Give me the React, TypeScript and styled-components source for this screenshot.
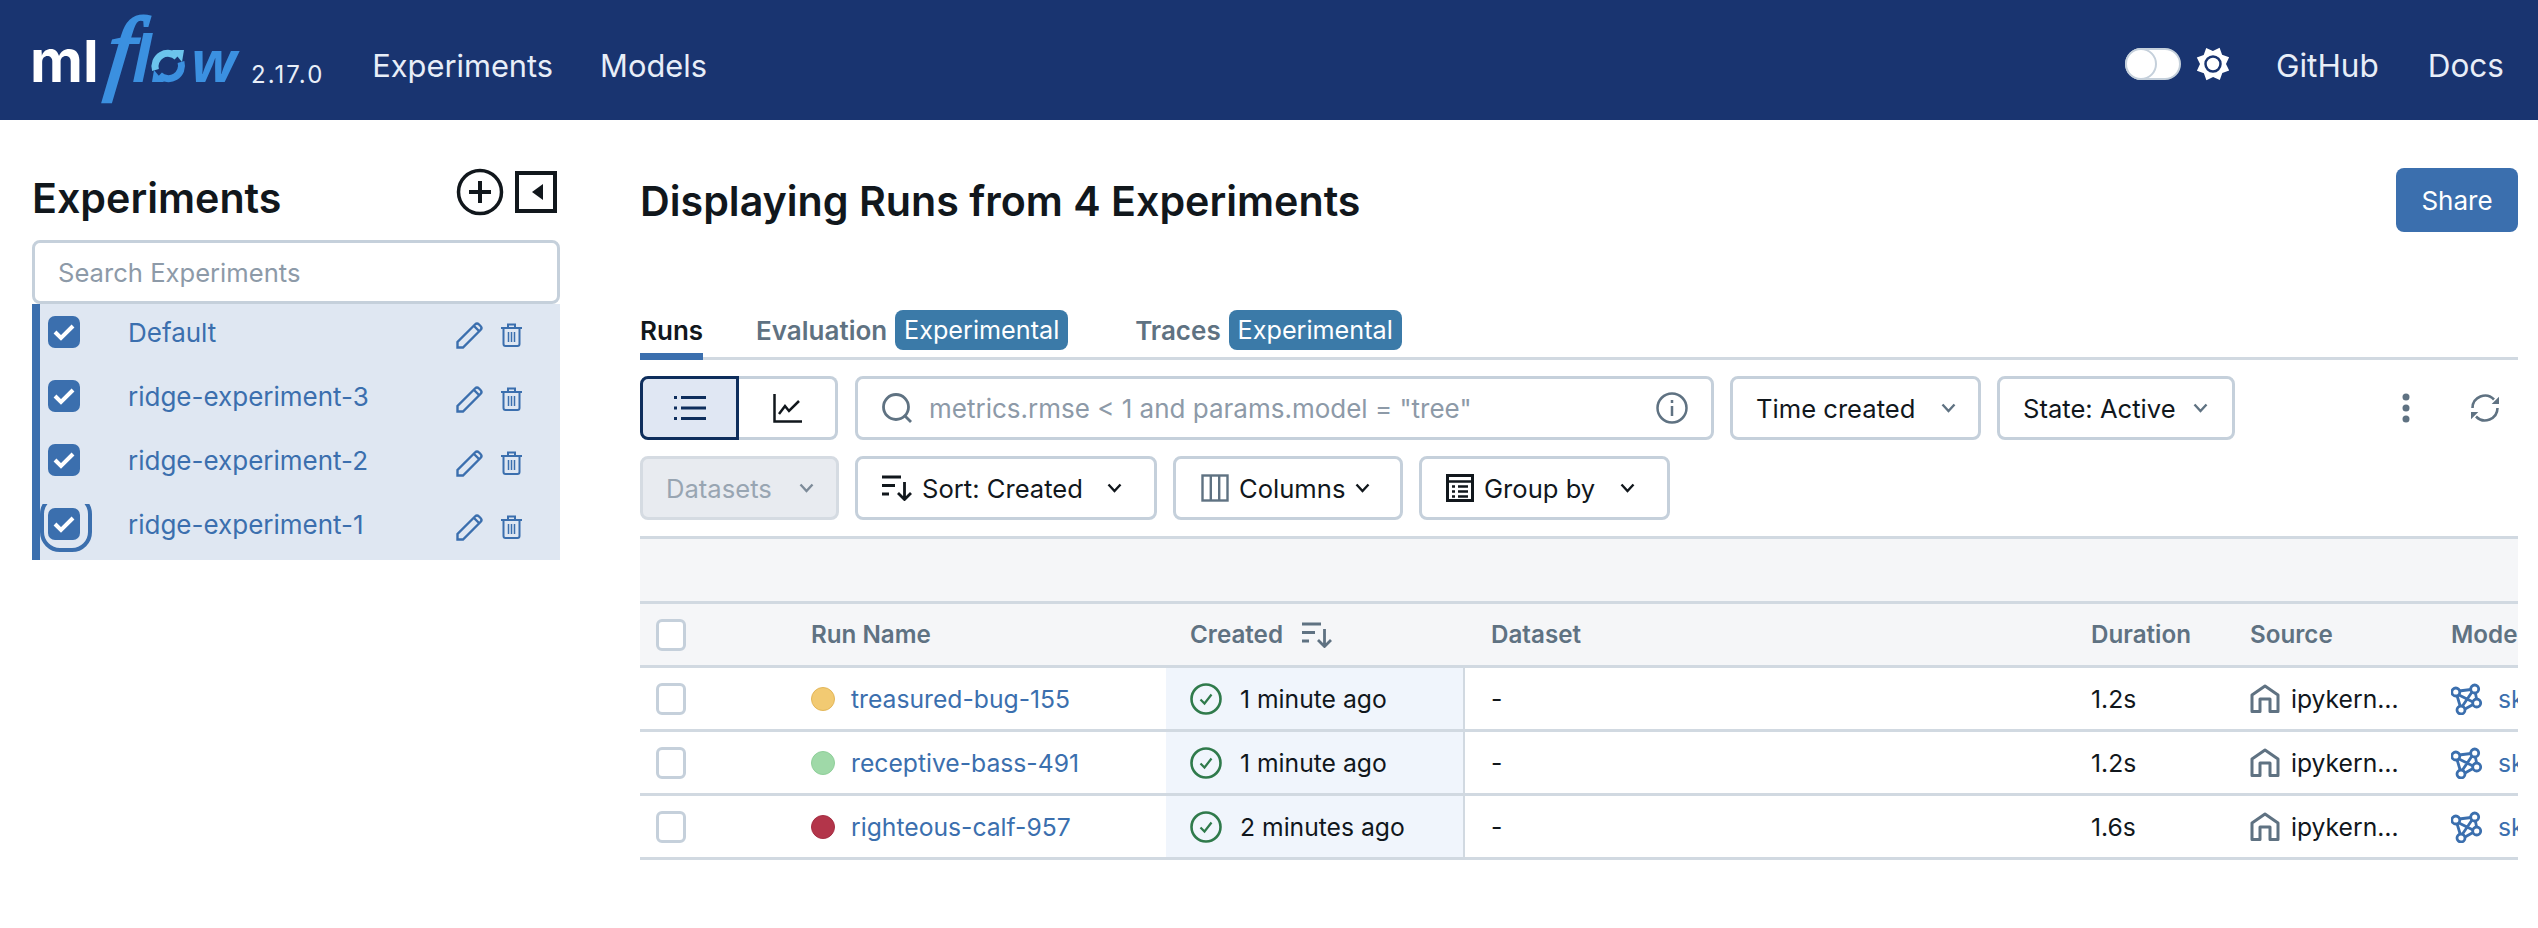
import React from "react";
import styled, { createGlobalStyle } from "styled-components";

const blue = "#3b6fae";
const line = "#d1d9e1";
const ctrl = "#c5d0db";
const grey = "#5f7282";
const ink = "#11171c";

const Global = createGlobalStyle`
  *, *::before, *::after { box-sizing: border-box; }
  html, body { margin: 0; background: #fff; }
  body { font-family: Inter, "Liberation Sans", sans-serif; color: ${ink}; font-size: 26px; }
  svg { flex: none; }
`;

const Header = styled.header`
  height: 120px;
  background: #193470;
  display: flex;
  align-items: center;
  color: #e8eef8;
`;
const LogoSvg = styled.svg`
  width: 240px;
  height: 120px;
`;
const Version = styled.span`
  font-size: 24px;
  margin-left: 11px;
  padding-top: 28px;
  letter-spacing: 2px;
`;
const NavLinks = styled.nav`
  display: flex;
  gap: 47px;
  margin-left: 48px;
  padding-top: 10px;
  font-size: 30.8px;
`;
const HeaderRight = styled.div`
  margin-left: auto;
  margin-right: 34px;
  padding-top: 8px;
  display: flex;
  align-items: center;
  font-size: 31.5px;
`;
const Toggle = styled.span`
  width: 56px;
  height: 32px;
  border-radius: 16px;
  background: #fff;
  border: 2px solid ${ctrl};
  position: relative;
  margin-right: 14px;
  &::after {
    content: "";
    position: absolute;
    left: -2px;
    top: -2px;
    width: 32px;
    height: 32px;
    border-radius: 50%;
    background: #fff;
    border: 2px solid ${ctrl};
  }
`;
const HeaderLinks = styled.div`
  display: flex;
  gap: 49px;
  margin-left: 45px;
  padding-top: 3px;
`;

const Page = styled.div`
  display: flex;
`;
const Sidebar = styled.aside`
  width: 640px;
  flex: none;
  padding: 48px 0 0 32px;
`;
const SideHead = styled.div`
  width: 528px;
  height: 72px;
  padding-bottom: 20px;
  display: flex;
  align-items: center;
`;
const SideTitle = styled.h2`
  margin: 0;
  font-size: 41.2px;
  font-weight: 600;
  flex: 1;
  padding-top: 8px;
`;
const SideIcons = styled.div`
  display: flex;
  align-items: center;
  gap: 11px;
  margin-right: 3px;
  padding-bottom: 4px;
`;
const SideSearch = styled.div`
  width: 528px;
  height: 64px;
  border: 3px solid ${ctrl};
  border-radius: 8px;
  padding-left: 23px;
  display: flex;
  align-items: center;
  color: #8d9aa8;
  font-size: 25.6px;
`;
const ExpList = styled.ul`
  list-style: none;
  margin: 0;
  padding: 0;
  width: 528px;
  background: #dfe7f2;
  border-left: 8px solid ${blue};
`;
const ExpRow = styled.li`
  height: 64px;
  display: flex;
  align-items: center;
  padding: 0 0 8px 8px;
  color: ${blue};
  position: relative;
`;
const CheckBox = styled.span`
  width: 32px;
  height: 32px;
  border-radius: 7px;
  background: ${blue};
  display: flex;
  align-items: center;
  justify-content: center;
  flex: none;
`;
const FocusRing = styled.span`
  position: absolute;
  left: 0;
  top: 8px;
  width: 52px;
  height: 48px;
  overflow: hidden;
  &::after {
    content: "";
    position: absolute;
    left: 0;
    top: -10px;
    width: 52px;
    height: 58px;
    border: 4px solid ${blue};
    border-radius: 20px;
  }
`;
const ExpName = styled.span`
  margin-left: 48px;
  flex: 1;
`;
const ExpActions = styled.span`
  display: flex;
  align-items: center;
  gap: 17px;
  margin-right: 38px;
  padding-top: 6px;
`;

const Main = styled.main`
  flex: 1;
  min-width: 0;
  padding: 48px 20px 0 0;
`;
const TitleRow = styled.div`
  height: 64px;
  display: flex;
  align-items: center;
  justify-content: space-between;
`;
const Title = styled.h1`
  margin: 0;
  padding-top: 2px;
  font-size: 41.2px;
  font-weight: 600;
`;
const ShareButton = styled.button`
  width: 122px;
  height: 64px;
  border: none;
  border-radius: 8px;
  background: ${blue};
  color: #fff;
  font: inherit;
`;
const Tabs = styled.div`
  margin-top: 76px;
  height: 52px;
  border-bottom: 3px solid ${line};
  display: flex;
  align-items: flex-start;
`;
const Tab = styled.div<{ $active?: boolean; $gap: number }>`
  height: 52px;
  display: flex;
  align-items: center;
  gap: 8px;
  margin-right: ${(p) => p.$gap}px;
  padding-bottom: ${(p) => (p.$active ? 1 : 8)}px;
  font-weight: 600;
  color: ${(p) => (p.$active ? ink : grey)};
  border-bottom: ${(p) => (p.$active ? `7px solid ${blue}` : "none")};
`;
const Badge = styled.span`
  height: 40px;
  width: 173px;
  background: #3b7aa8;
  color: #fff;
  border-radius: 8px;
  font-weight: 400;
  font-size: 25.2px;
  display: flex;
  align-items: center;
  justify-content: center;
`;
const ToolRow = styled.div`
  margin-top: 16px;
  height: 64px;
  display: flex;
  align-items: stretch;
  gap: 16px;
  font-size: 25.6px;
`;
const Segmented = styled.div`
  width: 198px;
  display: flex;
  flex: none;
  margin-right: 1px;
`;
const SegButton = styled.div<{ $active?: boolean }>`
  width: 99px;
  display: flex;
  align-items: center;
  justify-content: center;
  background: ${(p) => (p.$active ? "#e0e7f3" : "#fff")};
  border: 3px solid ${(p) => (p.$active ? "#0e2e5c" : ctrl)};
  border-left-width: ${(p) => (p.$active ? 3 : 0)}px;
  border-radius: ${(p) => (p.$active ? "8px 0 0 8px" : "0 8px 8px 0")};
`;
const SearchBox = styled.div`
  width: 859px;
  flex: none;
  border: 3px solid ${ctrl};
  border-radius: 8px;
  display: flex;
  align-items: center;
  padding: 0 23px 0 24px;
  color: #8d9aa8;
  gap: 17px;
  font-size: 26px;
`;
const Grow = styled.span`
  flex: 1;
`;
const Control = styled.div<{ $w: number; $pad: number; $disabled?: boolean }>`
  width: ${(p) => p.$w}px;
  flex: none;
  border: 3px solid ${(p) => (p.$disabled ? "#d5dbe2" : ctrl)};
  border-radius: 8px;
  background: ${(p) => (p.$disabled ? "#e8ebf0" : "#fff")};
  color: ${(p) => (p.$disabled ? "#98a5b2" : ink)};
  display: flex;
  align-items: center;
  padding-left: ${(p) => p.$pad}px;
  gap: 10px;
`;
const ChevronSlot = styled.span<{ $gap: number }>`
  margin-left: ${(p) => p.$gap}px;
  display: flex;
`;
const TailIcons = styled.div`
  margin-left: 151px;
  display: flex;
  align-items: center;
  gap: 60px;
`;
const Table = styled.div`
  margin-top: 16px;
  overflow: hidden;
`;
const GroupBand = styled.div`
  height: 68px;
  background: #f5f6f8;
  border-top: 3px solid ${line};
  border-bottom: 3px solid ${line};
`;
const Row = styled.div<{ $head?: boolean }>`
  display: grid;
  grid-template-columns: 155px 371px 299px 610px 159px 201px 83px;
  height: 64px;
  border-bottom: 3px solid ${line};
  background: ${(p) => (p.$head ? "#f5f6f8" : "#fff")};
  color: ${(p) => (p.$head ? grey : ink)};
  font-weight: ${(p) => (p.$head ? 600 : 400)};
  font-size: ${(p) => (p.$head ? 24.2 : 24.7)}px;
`;
const Cell = styled.div<{ $pad?: number; $gap?: number; $hot?: boolean }>`
  display: flex;
  align-items: center;
  min-width: 0;
  overflow: hidden;
  white-space: nowrap;
  padding-left: ${(p) => p.$pad ?? 16}px;
  gap: ${(p) => p.$gap ?? 0}px;
  ${(p) => p.$hot && `background:#f0f5fc; border-right:2px solid ${line};`}
`;
const EmptyBox = styled.span`
  width: 30px;
  height: 32px;
  border: 3px solid ${ctrl};
  border-radius: 6px;
  background: #fff;
`;
const Dot = styled.span<{ $c: string; $b: string }>`
  width: 24px;
  height: 24px;
  border-radius: 50%;
  background: ${(p) => p.$c};
  border: 1.5px solid ${(p) => p.$b};
  flex: none;
`;
const RunLink = styled.span`
  color: ${blue};
`;

const star = Array.from({ length: 16 }, (_, i) => {
  const a = ((i * 22.5 + 22) * Math.PI) / 180;
  const r = i % 2 === 0 ? 17.5 : 13;
  return `${(18 + r * Math.sin(a)).toFixed(1)},${(18 - r * Math.cos(a)).toFixed(1)}`;
}).join(" ");

const Logo = () => (
  <LogoSvg viewBox="0 0 240 120">
    <text x="30" y="82" fontFamily="Inter" fontWeight="700" fontSize="58" fill="#fff">ml</text>
    <text
      transform="translate(104 82) scale(1.05 1) skewX(-6)"
      fontFamily="Liberation Serif"
      fontStyle="italic"
      fontSize="94"
      fill="#3b90e0"
      stroke="#3b90e0"
      strokeWidth="2.600"
    >
      f
    </text>
    <text x="132" y="82" fontFamily="Open Sans" fontStyle="italic" fontWeight="700" fontSize="64" fill="#3b90e0">l</text>
    <g fill="none" strokeWidth="7">
      <path d="M155.500 70A13 13 0 0 1 177 57" stroke="#6cc4ec" />
      <path d="M181 62A13 13 0 0 1 159.500 75" stroke="#3b90e0" />
    </g>
    <path d="M172 50L184 50L182 62Z" fill="#6cc4ec" />
    <path d="M164 82L152 82L154 70Z" fill="#3b90e0" />
    <text x="191" y="82" fontFamily="Open Sans" fontStyle="italic" fontWeight="700" fontSize="58" fill="#3b90e0">w</text>
  </LogoSvg>
);
const Sun = () => (
  <svg width="36" height="36" viewBox="0 0 36 36">
    <polygon points={star} fill="#fff" />
    <circle cx="18" cy="18" r="7.500" fill="#fff" stroke="#193470" strokeWidth="2.500" />
  </svg>
);
const PlusCircle = () => (
  <svg width="48" height="48" viewBox="0 0 48 48" fill="none" stroke={ink} strokeWidth="3.500">
    <circle cx="24" cy="24" r="21.500" />
    <path d="M24 13V35M13 24H35" strokeWidth="4" />
  </svg>
);
const Collapse = () => (
  <svg width="42" height="42" viewBox="0 0 42 42">
    <rect x="2" y="2" width="38" height="38" fill="none" stroke={ink} strokeWidth="4" />
    <path d="M28 13V29L17 21Z" fill={ink} />
  </svg>
);
const Tick = () => (
  <svg width="22" height="18" viewBox="0 0 22 18" fill="none" stroke="#fff" strokeWidth="4">
    <path d="M2 9L8 15L20 3" />
  </svg>
);
const Pencil = () => (
  <svg width="28" height="28" viewBox="0 0 28 28" fill="none" stroke={blue} strokeWidth="2.400">
    <path d="M1.500 26.500V21L19 3.500Q21 1.500 23 3.500L24.500 5Q26.500 7 24.500 9L7 26.500Z" />
    <path d="M18 5L23 10" />
  </svg>
);
const Trash = () => (
  <svg width="21" height="24" viewBox="0 0 21 24" fill="none" stroke={blue} strokeWidth="2">
    <path d="M0 5H21M7 5V1.500H14V5M2.500 5V21Q2.500 23 4.500 23H16.500Q18.500 23 18.500 21V5" />
    <path d="M7.500 9V19M10.500 9V19M13.500 9V19" strokeWidth="1.500" />
  </svg>
);
const ListIcon = () => (
  <svg width="32" height="24" viewBox="0 0 32 24" fill="#0e2e5c">
    <rect x="0" y="0" width="3" height="3" /><rect x="7" y="0" width="25" height="3" />
    <rect x="0" y="10.500" width="3" height="3" /><rect x="7" y="10.500" width="25" height="3" />
    <rect x="0" y="21" width="3" height="3" /><rect x="7" y="21" width="25" height="3" />
  </svg>
);
const ChartIcon = () => (
  <svg width="29" height="29" viewBox="0 0 29 29" fill="none" stroke={ink} strokeWidth="2.500">
    <path d="M1.500 0V27.500H29" />
    <path d="M6 20L12 12L16 17L26 7" />
  </svg>
);
const SearchIcon = () => (
  <svg width="30" height="30" viewBox="0 0 30 30" fill="none" stroke={grey} strokeWidth="2.800">
    <circle cx="14" cy="14" r="12.500" />
    <path d="M23 23L29 29" />
  </svg>
);
const InfoIcon = () => (
  <svg width="32" height="32" viewBox="0 0 32 32" fill="none" stroke={grey} strokeWidth="2.500">
    <circle cx="16" cy="16" r="14.500" />
    <path d="M16 14V24M16 8V11" strokeWidth="2.500" />
  </svg>
);
const Chevron = ({ c = ink }: { c?: string }) => (
  <svg width="15" height="10" viewBox="0 0 15 10" fill="none" stroke={c} strokeWidth="2.400">
    <path d="M1.500 1.500L7.500 8L13.500 1.500" />
  </svg>
);
const SortIcon = ({ c = ink }: { c?: string }) => (
  <svg width="30" height="26" viewBox="0 0 30 26" fill="none" stroke={c} strokeWidth="2.800">
    <path d="M0 2H19M0 10.500H13M0 19H7" />
    <path d="M22.500 7V24M16 18L22.500 24.500L29 18" />
  </svg>
);
const ColumnsIcon = () => (
  <svg width="28" height="28" viewBox="0 0 28 28" fill="none" stroke={grey} strokeWidth="2.400">
    <rect x="1.500" y="1.500" width="25" height="25" />
    <path d="M9.800 1.500V26.500M18.200 1.500V26.500" />
  </svg>
);
const GroupIcon = () => (
  <svg width="28" height="28" viewBox="0 0 28 28">
    <rect x="1.500" y="1.500" width="25" height="25" fill="#fff" stroke={ink} strokeWidth="3" />
    <path d="M1.500 7.500H26.500" stroke={ink} strokeWidth="2.500" />
    <path d="M6 12.500H9M12 12.500H22M6 17.500H9M12 17.500H22M6 22.500H9M12 22.500H22" stroke={ink} strokeWidth="2.500" />
  </svg>
);
const Kebab = () => (
  <svg width="8" height="30" viewBox="0 0 8 30" fill={grey}>
    <circle cx="4" cy="4" r="3.500" /><circle cx="4" cy="15" r="3.500" /><circle cx="4" cy="26" r="3.500" />
  </svg>
);
const Refresh = () => (
  <svg width="30" height="30" viewBox="0 0 30 30" fill="none" stroke={grey} strokeWidth="2.600">
    <path d="M2.500 15A12.500 12.500 0 0 1 24 6.500M27.500 15A12.500 12.500 0 0 1 6 23.500" />
    <path d="M29 3.700V11H21.700ZM1 26.300V19H8.300Z" fill={grey} stroke="none" />
  </svg>
);
const DoneIcon = () => (
  <svg width="32" height="32" viewBox="0 0 32 32" fill="none" stroke="#2f7a4b" strokeWidth="2.600">
    <circle cx="16" cy="16" r="14.500" />
    <path d="M10.500 16.500L14.500 20.500L21.500 11.500" strokeWidth="2.200" />
  </svg>
);
const House = () => (
  <svg width="30" height="29" viewBox="0 0 30 29" fill="none" stroke={grey} strokeWidth="3">
    <path d="M2 11L15 2L28 11V27.500H20V15H10V27.500H2Z" strokeLinejoin="round" />
  </svg>
);
const ModelIcon = () => (
  <svg width="32" height="32" viewBox="0 0 32 32" fill="none" stroke={blue} strokeWidth="2.800">
    <path d="M8 8L20 6.500M24.500 10.500L25.500 15.500M22 21.500L14 26M6 12.500L9 22.500M8 12L22 19M21 9L11.500 23" />
    <circle cx="4.800" cy="9" r="4" fill="#fff" />
    <circle cx="23.700" cy="6" r="4" fill="#fff" />
    <circle cx="25.700" cy="20" r="4" fill="#fff" />
    <circle cx="10" cy="27" r="4" fill="#fff" />
  </svg>
);

const exps = ["Default", "ridge-experiment-3", "ridge-experiment-2", "ridge-experiment-1"];
const runs = [
  { n: "treasured-bug-155", c: "#f2ca72", b: "#e3b659", t: "1 minute ago", d: "1.2s" },
  { n: "receptive-bass-491", c: "#9fd9a8", b: "#8fcf9a", t: "1 minute ago", d: "1.2s" },
  { n: "righteous-calf-957", c: "#b3354a", b: "#a52e43", t: "2 minutes ago", d: "1.6s" },
];

export default function App() {
  return (
    <>
      <Global />
      <Header>
        <Logo />
        <Version>2.17.0</Version>
        <NavLinks>
          <span>Experiments</span>
          <span>Models</span>
        </NavLinks>
        <HeaderRight>
          <Toggle />
          <Sun />
          <HeaderLinks>
            <span>GitHub</span>
            <span>Docs</span>
          </HeaderLinks>
        </HeaderRight>
      </Header>
      <Page>
        <Sidebar>
          <SideHead>
            <SideTitle>Experiments</SideTitle>
            <SideIcons>
              <PlusCircle />
              <Collapse />
            </SideIcons>
          </SideHead>
          <SideSearch>Search Experiments</SideSearch>
          <ExpList>
            {exps.map((e, i) => (
              <ExpRow key={e}>
                <CheckBox><Tick /></CheckBox>
                {i === 3 && <FocusRing />}
                <ExpName>{e}</ExpName>
                <ExpActions>
                  <Pencil />
                  <Trash />
                </ExpActions>
              </ExpRow>
            ))}
          </ExpList>
        </Sidebar>
        <Main>
          <TitleRow>
            <Title>Displaying Runs from 4 Experiments</Title>
            <ShareButton>Share</ShareButton>
          </TitleRow>
          <Tabs>
            <Tab $active $gap={53}>Runs</Tab>
            <Tab $gap={67}>Evaluation<Badge>Experimental</Badge></Tab>
            <Tab $gap={0}>Traces<Badge>Experimental</Badge></Tab>
          </Tabs>
          <ToolRow>
            <Segmented>
              <SegButton $active><ListIcon /></SegButton>
              <SegButton><ChartIcon /></SegButton>
            </Segmented>
            <SearchBox>
              <SearchIcon />
              <Grow>metrics.rmse &lt; 1 and params.model = "tree"</Grow>
              <InfoIcon />
            </SearchBox>
            <Control $w={251} $pad={23}>Time created<ChevronSlot $gap={16}><Chevron c={grey} /></ChevronSlot></Control>
            <Control $w={238} $pad={23}>State: Active<ChevronSlot $gap={7}><Chevron c={grey} /></ChevronSlot></Control>
            <TailIcons>
              <Kebab />
              <Refresh />
            </TailIcons>
          </ToolRow>
          <ToolRow>
            <Control $w={199} $pad={23} $disabled>Datasets<ChevronSlot $gap={17}><Chevron c="#7d8b99" /></ChevronSlot></Control>
            <Control $w={302} $pad={24}><SortIcon />Sort: Created<ChevronSlot $gap={14}><Chevron /></ChevronSlot></Control>
            <Control $w={230} $pad={25}><ColumnsIcon />Columns<ChevronSlot $gap={0}><Chevron /></ChevronSlot></Control>
            <Control $w={251} $pad={24}><GroupIcon />Group by<ChevronSlot $gap={15}><Chevron /></ChevronSlot></Control>
          </ToolRow>
          <Table>
            <GroupBand />
            <Row $head>
              <Cell $pad={16}><EmptyBox /></Cell>
              <Cell>Run Name</Cell>
              <Cell $pad={24} $gap={19}>Created<SortIcon c={grey} /></Cell>
              <Cell $pad={26}>Dataset</Cell>
              <Cell>Duration</Cell>
              <Cell>Source</Cell>
              <Cell>Models</Cell>
            </Row>
            {runs.map((r) => (
              <Row key={r.n}>
                <Cell $pad={16}><EmptyBox /></Cell>
                <Cell $gap={16}><Dot $c={r.c} $b={r.b} /><RunLink>{r.n}</RunLink></Cell>
                <Cell $pad={24} $gap={18} $hot><DoneIcon />{r.t}</Cell>
                <Cell $pad={26}>-</Cell>
                <Cell>{r.d}</Cell>
                <Cell $gap={11}><House />ipykern…</Cell>
                <Cell $gap={15}><ModelIcon /><RunLink>sklearn</RunLink></Cell>
              </Row>
            ))}
          </Table>
        </Main>
      </Page>
    </>
  );
}
